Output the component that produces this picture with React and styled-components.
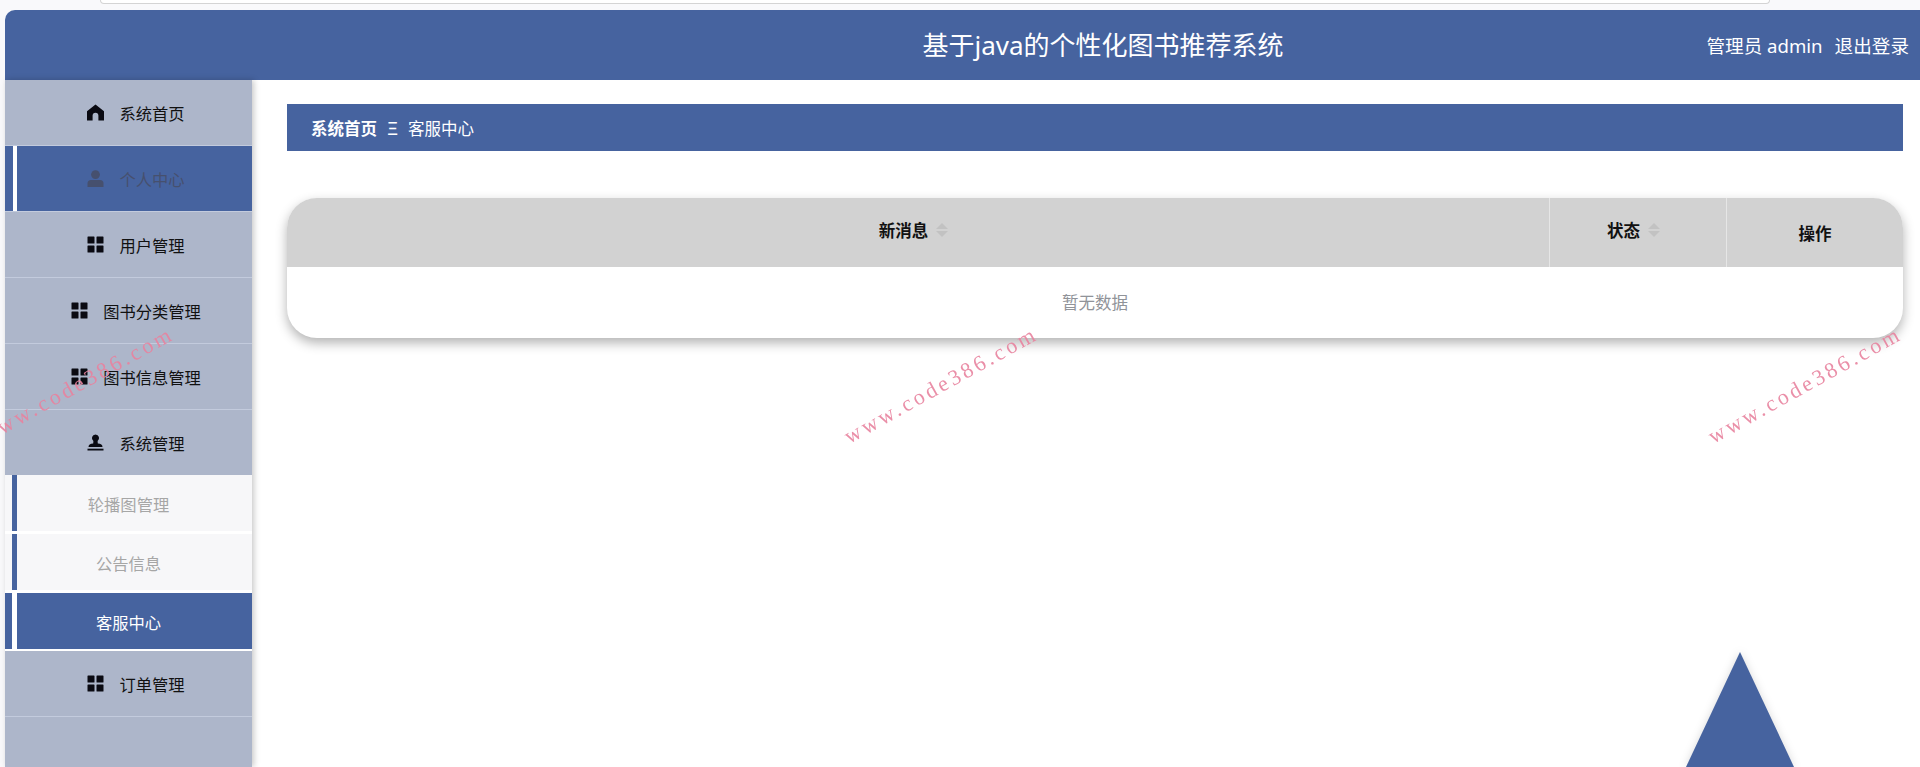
import React from "react"
import styled, { createGlobalStyle } from "styled-components"

const GlobalStyle = createGlobalStyle`
  html, body {
    margin: 0;
    padding: 0;
    background: #fff;
  }
  body {
    font-family: "Noto Sans", "Noto Sans CJK SC", sans-serif;
    overflow: hidden;
  }
`

const blue = "#46639f"

const Page = styled.div`
  position: relative;
  width: 1920px;
  height: 767px;
  overflow: hidden;
  background: #f9f9fb;
`

const BrowserEdge = styled.div`
  height: 10px;
  padding: 0 150px 0 100px;
`

const AddressBar = styled.div`
  height: 3px;
  background: #fff;
  border: 1px solid #d4d4d4;
  border-top: none;
  border-radius: 0 0 12px 12px;
`

const Header = styled.header`
  height: 70px;
  margin-left: 5px;
  padding-left: 281px;
  background: ${blue};
  border-top-left-radius: 10px;
  display: grid;
  grid-template-columns: 1fr auto 1fr;
  align-items: center;
  color: #fff;
`

const Title = styled.h1`
  margin: 0;
  grid-column: 2;
  font-size: 26px;
  font-weight: 400;
  line-height: 1;
`

const UserBox = styled.div`
  grid-column: 3;
  justify-self: end;
  padding: 0 11px 2px 0;
  display: flex;
  gap: 12px;
  font-size: 18.6px;
`

const Layout = styled.div`
  display: flex;
  height: 687px;
  margin-left: 5px;
  background: #fff;
`

const Sidebar = styled.nav`
  width: 247px;
  flex: none;
  background: #adb6ca;
  box-shadow: 2px 0 6px rgba(0, 0, 0, 0.22);
  position: relative;
  z-index: 1;
`

const MenuItem = styled.div`
  position: relative;
  height: 65px;
  padding-left: 15px;
  border-bottom: 1px solid #c3cbdd;
  display: flex;
  align-items: center;
  justify-content: center;
  gap: 15px;
  font-size: 16.3px;
  color: ${(p) => (p.$active ? "#46506e" : "#111")};
  background: ${(p) => (p.$active ? blue : "transparent")};

  ${(p) =>
    p.$active &&
    `&::before {
      content: "";
      position: absolute;
      left: 8px;
      top: 0;
      bottom: 0;
      width: 4px;
      background: #fff;
    }`}

  svg {
    width: 17px;
    height: 17px;
    flex: none;
  }
`

const PlainItem = styled(MenuItem)`
  border-bottom: none;
`

const SubList = styled.div`
  background: #fff;
  padding-bottom: 2px;
`

const SubItem = styled.div`
  position: relative;
  height: 56px;
  margin-bottom: 3px;
  display: flex;
  align-items: center;
  justify-content: center;
  padding-top: 1px;
  box-sizing: border-box;
  font-size: 16.3px;
  color: ${(p) => (p.$active ? "#fff" : "#a6a6a6")};
  background: ${(p) => (p.$active ? blue : "#f7f7f9")};

  &:last-child {
    margin-bottom: 0;
  }

  &::before {
    content: "";
    position: absolute;
    left: 7px;
    top: 0;
    bottom: 0;
    width: 5px;
    background: ${(p) => (p.$active ? "#fff" : blue)};
  }
`

const Main = styled.main`
  flex: 1;
  min-width: 0;
  padding: 24px 17px 0 35px;
  background: #fff;
`

const Crumbs = styled.div`
  height: 47px;
  padding-left: 24px;
  background: ${blue};
  color: #fff;
  display: flex;
  align-items: center;
  font-size: 16.5px;
`

const CrumbLink = styled.span`
  font-weight: 700;
`

const CrumbSep = styled.span`
  width: 31px;
  text-align: center;
  font-size: 18px;
  font-weight: 400;
`

const Table = styled.section`
  margin-top: 47px;
  border-radius: 30px;
  overflow: hidden;
  background: #fff;
  box-shadow: 0 5px 12px rgba(0, 0, 0, 0.3);
`

const HeadRow = styled.div`
  height: 69px;
  background: #d2d2d2;
  display: grid;
  grid-template-columns: 1262px 177px 1fr;
`

const HeadCell = styled.div`
  display: flex;
  align-items: center;
  justify-content: center;
  gap: 8px;
  padding: 0 ${(p) => (p.$low ? 0 : 9)}px ${(p) => (p.$low ? 0 : 6)}px 0;
  font-size: 16.5px;
  font-weight: 700;
  color: #111;
  border-left: ${(p) => (p.$first ? "none" : "1px solid #e6e6e6")};
`

const Caret = styled.span`
  display: flex;
  flex-direction: column;
  gap: 2px;

  &::before,
  &::after {
    content: "";
    width: 0;
    height: 0;
    border-left: 6px solid transparent;
    border-right: 6px solid transparent;
  }
  &::before {
    border-bottom: 6px solid #c2c2c2;
  }
  &::after {
    border-top: 6px solid #c2c2c2;
  }
`

const EmptyRow = styled.div`
  height: 70px;
  display: flex;
  align-items: center;
  justify-content: center;
  padding-bottom: 1px;
  font-size: 16.5px;
  color: #909399;
`

const Watermark = styled.div`
  position: absolute;
  top: 370px;
  left: ${(p) => p.$x - 130}px;
  width: 260px;
  text-align: center;
  transform: rotate(-29deg);
  font-family: "Liberation Serif", serif;
  font-size: 22px;
  letter-spacing: 3.2px;
  line-height: 30px;
  color: #e8839f;
  opacity: 0.9;
  z-index: 3;
  white-space: nowrap;
`

const BackTop = styled.div`
  position: absolute;
  left: 1686px;
  top: 652px;
  width: 0;
  height: 0;
  border-left: 54px solid transparent;
  border-right: 54px solid transparent;
  border-bottom: 115px solid ${blue};
  filter: drop-shadow(0 0 4px rgba(0, 0, 0, 0.14));
  z-index: 2;
`

const HomeIcon = () => (
  <svg viewBox="0 0 17 17" fill="#0a0a12">
    <path d="M8.5 0.5 L17 7.2 V16.5 H11.4 V11.6 A2.9 2.9 0 0 0 5.6 11.6 V16.5 H0 V7.2 Z" />
  </svg>
)

const UserIcon = () => (
  <svg viewBox="0 0 17 17" fill="#46506e">
    <circle cx="8.5" cy="4.6" r="4.4" />
    <path d="M0.5 17 V13.5 Q0.5 10 4 10 H13 Q16.5 10 16.5 13.5 V17 Z" />
  </svg>
)

const GridIcon = () => (
  <svg viewBox="0 0 17 17" fill="#0a0a12">
    <rect x="0.5" y="0.5" width="7" height="7" rx="0.6" />
    <rect x="9.5" y="0.5" width="7" height="7" rx="0.6" />
    <rect x="0.5" y="9.5" width="7" height="7" rx="0.6" />
    <rect x="9.5" y="9.5" width="7" height="7" rx="0.6" />
  </svg>
)

const StampIcon = () => (
  <svg viewBox="0 0 17 17" fill="#0a0a12">
    <path d="M8.5 0.5 A3.6 3.6 0 0 1 10.6 7 L10.8 9.5 Q15.5 9.8 15.5 13 H1.5 Q1.5 9.8 6.2 9.5 L6.4 7 A3.6 3.6 0 0 1 8.5 0.5 Z" />
    <rect x="0.5" y="14.7" width="16" height="1.8" />
  </svg>
)

const App = () => {
  return (
    <Page>
      <GlobalStyle />
      <BrowserEdge>
        <AddressBar />
      </BrowserEdge>
      <Header>
        <Title>基于java的个性化图书推荐系统</Title>
        <UserBox>
          <span>管理员 admin</span>
          <span>退出登录</span>
        </UserBox>
      </Header>
      <Layout>
        <Sidebar>
          <MenuItem><HomeIcon />系统首页</MenuItem>
          <MenuItem $active><UserIcon />个人中心</MenuItem>
          <MenuItem><GridIcon />用户管理</MenuItem>
          <MenuItem><GridIcon />图书分类管理</MenuItem>
          <MenuItem><GridIcon />图书信息管理</MenuItem>
          <PlainItem><StampIcon />系统管理</PlainItem>
          <SubList>
            <SubItem>轮播图管理</SubItem>
            <SubItem>公告信息</SubItem>
            <SubItem $active>客服中心</SubItem>
          </SubList>
          <MenuItem><GridIcon />订单管理</MenuItem>
        </Sidebar>
        <Main>
          <Crumbs>
            <CrumbLink>系统首页</CrumbLink>
            <CrumbSep>Ξ</CrumbSep>
            <span>客服中心</span>
          </Crumbs>
          <Table>
            <HeadRow>
              <HeadCell $first>新消息<Caret /></HeadCell>
              <HeadCell>状态<Caret /></HeadCell>
              <HeadCell $low>操作</HeadCell>
            </HeadRow>
            <EmptyRow>暂无数据</EmptyRow>
          </Table>
        </Main>
      </Layout>
      <Watermark $x={77}>www.code386.com</Watermark>
      <Watermark $x={941}>www.code386.com</Watermark>
      <Watermark $x={1805}>www.code386.com</Watermark>
      <BackTop />
    </Page>
  )
}

export default App
